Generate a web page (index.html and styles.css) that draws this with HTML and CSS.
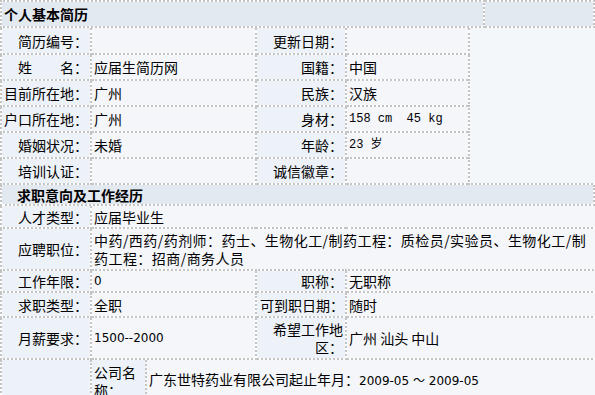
FILE: index.html
```html
<!DOCTYPE html>
<html>
<head>
<meta charset="utf-8">
<link rel="stylesheet" href="styles.css">
</head>
<body>
<div class="resume">
  <table class="tbl head">
    <colgroup><col class="c-head"><col></colgroup>
    <tr class="r-h1"><td class="title">个人基本简历</td><td class="title"></td></tr>
  </table>
  <table class="tbl basic">
    <colgroup><col class="c1"><col class="c2"><col class="c3"><col class="c4"><col class="c5"></colgroup>
    <tr class="r-b">
      <td class="lbl">简历编号：</td><td class="val"></td>
      <td class="lbl">更新日期：</td><td class="val"></td>
      <td class="val photo" rowspan="6"></td>
    </tr>
    <tr class="r-b"><td class="lbl">姓　　名：</td><td class="val">应届生简历网</td><td class="lbl">国籍：</td><td class="val">中国</td></tr>
    <tr class="r-b"><td class="lbl">目前所在地：</td><td class="val">广州</td><td class="lbl">民族：</td><td class="val">汉族</td></tr>
    <tr class="r-b"><td class="lbl">户口所在地：</td><td class="val">广州</td><td class="lbl">身材：</td><td class="val mono">158 cm&nbsp;&nbsp;45 kg</td></tr>
    <tr class="r-b"><td class="lbl">婚姻状况：</td><td class="val">未婚</td><td class="lbl">年龄：</td><td class="val mono">23 岁</td></tr>
    <tr class="r-b"><td class="lbl">培训认证：</td><td class="val"></td><td class="lbl">诚信徽章：</td><td class="val"></td></tr>
  </table>
  <table class="tbl head">
    <tr class="r-h2"><td class="title sub">求职意向及工作经历</td></tr>
  </table>
  <table class="tbl job">
    <colgroup><col class="c1"><col class="c2"><col class="c3"><col class="c6"></colgroup>
    <tr class="r-s"><td class="lbl">人才类型：</td><td class="val" colspan="3">应届毕业生</td></tr>
    <tr class="r-l"><td class="lbl">应聘职位：</td><td class="val wide" colspan="3">中药/西药/药剂师：药士、生物化工/制药工程：质检员/实验员、生物化工/制<br>药工程：招商/商务人员</td></tr>
    <tr class="r-s"><td class="lbl">工作年限：</td><td class="val num">0</td><td class="lbl">职称：</td><td class="val">无职称</td></tr>
    <tr class="r-m"><td class="lbl">求职类型：</td><td class="val">全职</td><td class="lbl tight">可到职日期：</td><td class="val">随时</td></tr>
    <tr class="r-l"><td class="lbl">月薪要求：</td><td class="val num">1500--2000</td><td class="lbl">希望工作地区：</td><td class="val">广州 汕头 中山</td></tr>
    <tr>
      <td class="lbl"></td>
      <td class="val nest-cell" colspan="3">
        <table class="nest">
          <colgroup><col class="n1"><col></colgroup>
          <tr><td class="lbl nl">公司名称：</td><td class="val nv">广东世特药业有限公司起止年月：<span class="num">2009-05 ～ 2009-05</span></td></tr>
        </table>
      </td>
    </tr>
  </table>
</div>
</body>
</html>
```
FILE: styles.css
```css
html, body {
  margin: 0;
  padding: 0;
  background: #ffffff;
}
body {
  font-family: "Noto Sans CJK SC", "Noto Sans", sans-serif;
  font-size: 14px;
  color: #000;
  width: 595px;
  height: 395px;
  overflow: hidden;
}
.resume {
  width: 595px;
}
.tbl {
  width: 595px;
  border-collapse: collapse;
  table-layout: fixed;
}
.tbl + .tbl tr:first-child > td {
  border-top: 0;
}
.tbl td {
  border: 2px dotted #c4c4c4;
  padding: 0 2px;
  line-height: 18px;
  vertical-align: middle;
  overflow: hidden;
}
.c-head { width: 483px; }
.c1 { width: 90px; }
.c2 { width: 165px; }
.c3 { width: 90px; }
.c4 { width: 123px; }
.c5 { width: 127px; }
.c6 { width: 250px; }
.title {
  background: #e3e9f1;
  font-weight: bold;
  text-align: left;
}
.r-h1 { height: 26px; }
.r-h1 .title { padding-left: 2px; }
.r-h2 { height: 20px; }
.sub { padding-left: 15px !important; }
.lbl {
  background: #edf2f8;
  text-align: right;
  white-space: normal;
}
.tight { padding: 0 1px !important; }
.val {
  background: #f4f6fa;
  text-align: left;
}
.wide { letter-spacing: 0.45px; }
.photo { background: #f4f7fa; }
.r-b { height: 26px; }
.r-s { height: 22px; }
.r-m { height: 25px; }
.r-l { height: 42px; }
.mono {
  font-family: "Liberation Mono", "Noto Sans CJK SC", monospace;
  font-size: 12px;
}
.num {
  font-family: "DejaVu Sans", "Noto Sans CJK SC", sans-serif;
  font-size: 12px;
}
.tbl td.nest-cell {
  padding: 0;
  vertical-align: top;
}
.nest {
  width: 100%;
  border-collapse: collapse;
  table-layout: fixed;
}
.nest td {
  border: 2px dotted #c4c4c4;
  padding: 0 2px;
  line-height: 18px;
  height: 40px;
}
.nest td:first-child { border-left: 0; }
.nest td:last-child { border-right: 0; }
.nest tr:first-child td { border-top: 0; }
.n1 { width: 54px; }
.nest td.nl { text-align: left; vertical-align: top; padding-top: 3px; }
.nest td.nv { padding-bottom: 4px; }
```
